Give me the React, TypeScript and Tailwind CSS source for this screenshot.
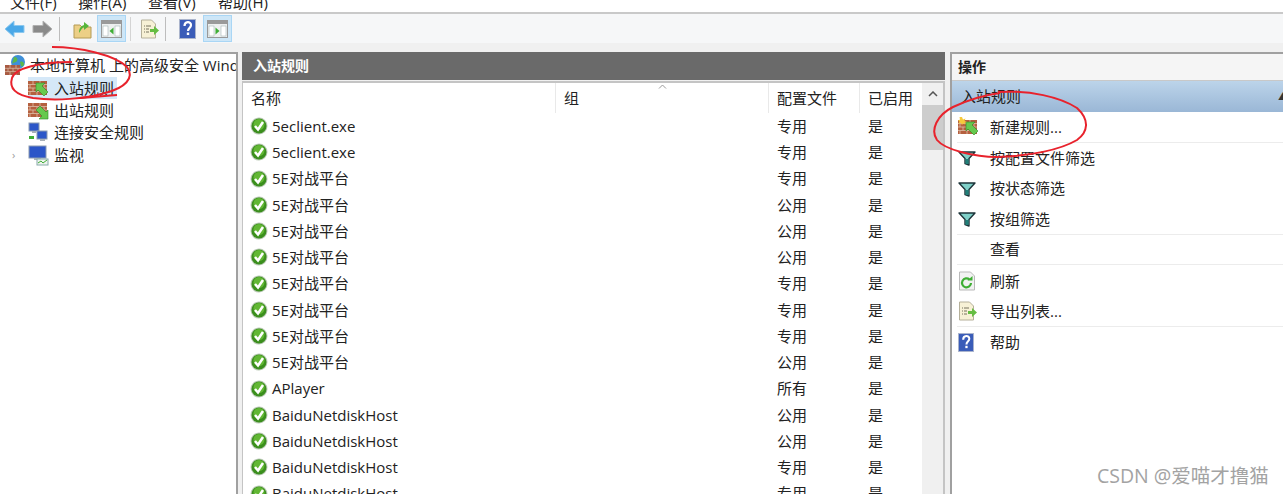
const cjk = "font-['Open_Sans','Noto_Sans_CJK_SC',sans-serif]";

const rows = [
  ["5eclient.exe", "专用"],
  ["5eclient.exe", "专用"],
  ["5E对战平台", "专用"],
  ["5E对战平台", "公用"],
  ["5E对战平台", "公用"],
  ["5E对战平台", "公用"],
  ["5E对战平台", "专用"],
  ["5E对战平台", "专用"],
  ["5E对战平台", "专用"],
  ["5E对战平台", "公用"],
  ["APlayer", "所有"],
  ["BaiduNetdiskHost", "公用"],
  ["BaiduNetdiskHost", "公用"],
  ["BaiduNetdiskHost", "专用"],
  ["BaiduNetdiskHost", "专用"],
];

const Check = () => (
  <svg width="18" height="18" viewBox="0 0 18 18" className="shrink-0">
    <circle cx="9" cy="9" r="8.500" fill="#b9c9b4" />
    <circle cx="9" cy="9" r="7.500" fill="#3b8f1d" />
    <circle cx="9" cy="7.500" r="5.500" fill="#74c83f" opacity="0.7" />
    <path d="M5 9l3 3.500 5-7.500" fill="none" stroke="#fff" strokeWidth="2.500" />
  </svg>
);

const Wall = ({ arrow }: { arrow: "in" | "out" | "new" }) => (
  <svg width="21" height="20" viewBox="0 0 21 20" className="shrink-0">
    <rect x="0" y="3" width="19" height="14" fill="#b5603f" />
    <path d="M0 6.500h19M0 10h19M0 13.500h19M5 3v3.500M12 3v3.500M2 6.500v3.500M9 6.500v3.500M16 6.500v3.500M5 10v3.500M12 10v3.500M2 13.500v3.500M9 13.500v3.500M16 13.500v3.500" stroke="#d9b59e" strokeWidth="0.900" />
    {arrow === "out" ? (
      <path d="M20 19H11L14 16L8 10L12 6L18 12L20 10Z" fill="#66c94e" stroke="#2f8a2a" strokeWidth="0.600" />
    ) : (
      <path d="M8 5H17L14 8L20 14L16 18L10 12L8 14Z" fill="#66c94e" stroke="#2f8a2a" strokeWidth="0.600" />
    )}
    {arrow === "new" && <path d="M4 0l1 2.500 2.500-1-1 2.500 2.500 1-2.500 1 1 1.500-2.500-1-1 1.500-1-2-2.500 .5 1-2-1.500-1 2-1-.5-2.500z" fill="#f6c93c" />}
  </svg>
);

const Funnel = () => (
  <svg width="18" height="18" viewBox="0 0 18 18" className="shrink-0">
    <path d="M1 3h16l-6 6.500V16l-4-1.500V9.500z" fill="#7fd0c8" stroke="#1c3338" strokeWidth="1.400" strokeLinejoin="round" />
    <path d="M7.500 10h3v5h-3z" fill="#1f7f78" />
  </svg>
);

const Help = ({ size = 17 }: { size?: number }) => (
  <svg width={size} height={size + 3} viewBox="0 0 17 20" className="shrink-0">
    <rect x="0.500" y="0.500" width="16" height="19" fill="#3a5cb8" stroke="#aab4cc" />
    <path d="M5.500 7c0-5 6.500-5 6.500-1 0 3-3 3-3 6" fill="none" stroke="#fff" strokeWidth="2.200" />
    <rect x="7.800" y="13.500" width="2.400" height="2.500" fill="#fff" />
  </svg>
);

const Export = () => (
  <svg width="20" height="20" viewBox="0 0 20 20" className="shrink-0">
    <path d="M1.500 1h10l4 4v14h-14z" fill="#f7f1d6" stroke="#b5b09a" />
    <path d="M4 7h1M6 7h5M4 10h1M6 10h3M4 13h1M6 13h3" stroke="#77735f" />
    <path d="M10 10h4V7l5 4.500-5 4.500v-3h-4z" fill="#66bd42" />
  </svg>
);

const Refresh = () => (
  <svg width="18" height="20" viewBox="0 0 18 20" className="shrink-0">
    <path d="M1.500 1h11l4 4v14h-15z" fill="#f2f2f2" stroke="#b9b9b9" />
    <path d="M13 12a4.500 4.500 0 1 1-1.500-3.500" fill="none" stroke="#3fae35" strokeWidth="2.200" />
    <path d="M9.500 9.500h5V5z" fill="#3fae35" />
  </svg>
);

const Pane = ({ side }: { side: "left" | "right" }) => (
  <div className="w-[29px] h-[27px] flex items-center justify-center bg-[#cde6f7] border border-[#a9d6f5]">
    <svg width="21" height="20" viewBox="0 0 21 20">
      <rect x="0.500" y="1.500" width="20" height="17" fill="#eef0f0" stroke="#999" />
      <rect x="1" y="2" width="19" height="3" fill="#9a9a9a" />
      <rect x="2" y="7" width="5" height="10" fill="#fff" stroke="#9aa" strokeWidth="0.500" />
      <rect x="14" y="7" width="5" height="10" fill="#fff" stroke="#9aa" strokeWidth="0.500" />
      {side === "left" ? <path d="M12.500 8.500v7l-4-3.500z" fill="#3fae35" /> : <path d="M8.500 8.500v7l4-3.500z" fill="#3fae35" />}
    </svg>
  </div>
);

const Computers = ({ monitor }: { monitor?: boolean }) => (
  <svg width="21" height="21" viewBox="0 0 21 21" className="shrink-0">
    {monitor ? (
      <>
        <rect x="1" y="1" width="17" height="12" fill="#2c56c8" stroke="#8a9ab0" />
        <rect x="6" y="13" width="7" height="2" fill="#a8b0b8" />
        <rect x="9" y="14" width="11" height="6" fill="#eef3ee" stroke="#8aa" />
        <path d="M10 18l3-2 2 2 4-3" fill="none" stroke="#3fae35" />
      </>
    ) : (
      <>
        <rect x="1" y="1" width="10" height="8" fill="#2c56c8" stroke="#8a9ab0" />
        <rect x="9" y="9" width="10" height="8" fill="#2c56c8" stroke="#8a9ab0" />
        <rect x="4" y="9" width="4" height="2" fill="#a8b0b8" />
        <rect x="12" y="17" width="5" height="2" fill="#a8b0b8" />
        <rect x="1" y="14" width="5" height="3" fill="#3fae35" />
      </>
    )}
  </svg>
);

const Globe = () => (
  <svg width="22" height="22" viewBox="0 0 22 22" className="shrink-0">
    <circle cx="13" cy="8" r="7" fill="#3f8fd8" />
    <path d="M9 3c3 0 4 2 3 4s-4 1-5 3M15 8c2-1 4 0 4 2s-2 3-3 2z" fill="#5cb84a" />
    <rect x="0" y="11" width="15" height="10" fill="#a85a42" />
    <path d="M0 14.300h15M0 17.600h15M5 11v3.300M11 11v3.300M3 14.300v3.300M8 14.300v3.300M13 14.300v3.300M5 17.600v3.400M11 17.600v3.400" stroke="#dcc2ac" strokeWidth="0.700" />
  </svg>
);

const Head = ({ w, label, sep = true }: { w: string; label: string; sep?: boolean }) => (
  <div className={`${w} shrink-0 h-[30px] flex items-center pl-2 pt-[1px] ${sep ? "border-r border-[#e9e9e9]" : ""}`}>{label}</div>
);

const Action = ({ icon, label, line }: { icon?: React.ReactNode; label: string; line?: boolean }) => (
  <div className={`h-[30.700px] flex items-center ml-[5px] ${line ? "border-b border-[#ececec]" : ""}`}>
    <div className="w-[33px] pl-[1px] flex">{icon}</div>
    <span className="text-[15px] text-[#222]">{label}</span>
  </div>
);

export default function App() {
  return (
    <div className={`relative w-[1283px] h-[494px] overflow-hidden bg-[#f0f0f0] text-[15px] text-[#222] ${cjk}`}>
      {/* menu */}
      <div className="h-[14px] bg-white border-b-2 border-[#c9c9c9] overflow-hidden flex text-[15px] leading-[20px] pl-[10px]">
        <span className="w-[68px] -mt-[8px]">文件(F)</span>
        <span className="w-[70px] -mt-[8px]">操作(A)</span>
        <span className="w-[70px] -mt-[8px]">查看(V)</span>
        <span className="-mt-[8px]">帮助(H)</span>
      </div>

      {/* toolbar */}
      <div className="h-[29px] bg-[#f6f7f8] flex items-center pl-[4px]">
        <svg width="21" height="18" viewBox="0 0 21 18">
          <path d="M1 9l9-8v4.500h10v7H10V17z" fill="#4aa8e8" stroke="#8cc8ee" />
        </svg>
        <svg width="21" height="18" viewBox="0 0 21 18" className="ml-[7px]">
          <path d="M20 9l-9-8v4.500H1v7h10V17z" fill="#8a8a8a" stroke="#b0b0b0" />
        </svg>
        <div className="w-px h-[24px] bg-[#bdbdbd] ml-[6px] mr-[13px]" />
        <svg width="19" height="20" viewBox="0 0 19 20">
          <path d="M1 6h6l2 2h9v11H1z" fill="#eccf86" stroke="#b49a55" />
          <path d="M6 14c0-5 2-7 5-8V3l5 4-5 4V8c-2 1-3 3-5 6z" fill="#55b53a" />
        </svg>
        <div className="ml-[5px]"><Pane side="left" /></div>
        <div className="w-px h-[24px] bg-[#d4d4d4] ml-[4px] mr-[9px]" />
        <Export />
        <div className="w-px h-[24px] bg-[#bdbdbd] ml-[5px] mr-[13px]" />
        <Help />
        <div className="ml-[7px]"><Pane side="right" /></div>
      </div>

      {/* panes */}
      <div className="flex pt-[9px] gap-[4px]">
        {/* tree */}
        <div className="w-[238px] h-[442px] shrink-0 bg-white border-t-2 border-r-2 border-[#a0a0a0] overflow-hidden">
          <div className="flex items-center h-[22px] mb-[1px] pl-[5px] whitespace-nowrap">
            <Globe />
            <span className="ml-[3px] min-w-0 overflow-hidden">本地计算机 上的高级安全 Windows</span>
          </div>
          {[
            { icon: <Wall arrow="in" />, label: "入站规则", on: true },
            { icon: <Wall arrow="out" />, label: "出站规则" },
            { icon: <Computers />, label: "连接安全规则" },
            { icon: <Computers monitor />, label: "监视", caret: true },
          ].map((t) => (
            <div key={t.label} className="flex items-center h-[22.300px] pl-[12px]">
              <span className="w-[16px] text-[11px] text-[#999]">{t.caret ? "›" : ""}</span>
              <div className={`flex items-center h-[22px] ${t.on ? "bg-[#d5e8f8]" : ""}`}>
                {t.icon}
                <span className="ml-[5px] pr-[3px]">{t.label}</span>
              </div>
            </div>
          ))}
        </div>

        {/* center */}
        <div className="w-[703px] shrink-0">
          <div className="h-[28px] pb-[2px] bg-[#6a6a6a] text-white font-bold text-[14px] flex items-center pl-[11px]">入站规则</div>
          <div className="mt-[1px] h-[413px] bg-white border-l border-t-2 border-r-2 border-[#c4c4c4] flex overflow-hidden">
            <div className="w-[679px] shrink-0">
              <div className="relative flex">
                <Head w="w-[313px]" label="名称" />
                <Head w="w-[213px]" label="组" />
                <Head w="w-[91px]" label="配置文件" />
                <Head w="w-[62px]" label="已启用" sep={false} />
                <svg width="9" height="5" viewBox="0 0 9 5" className="absolute left-[415px] top-[1px]">
                  <path d="M1 4.500l3.500-3.500 3.500 3.500" fill="none" stroke="#999" />
                </svg>
              </div>
              {rows.map((r, i) => (
                <div key={i} className="flex h-[26.250px] items-center">
                  <div className="w-[313px] shrink-0 flex items-center pl-[7px]">
                    <Check />
                    <span className="ml-[4px]">{r[0]}</span>
                  </div>
                  <div className="w-[213px] shrink-0" />
                  <div className="w-[91px] shrink-0 pl-2">{r[1]}</div>
                  <div className="w-[62px] shrink-0 pl-2">是</div>
                </div>
              ))}
            </div>
            <div className="w-[21px] shrink-0 bg-[#f0f0f0]">
              <div className="h-[22px] flex items-center justify-center">
                <svg width="10" height="6" viewBox="0 0 10 6">
                  <path d="M1 5l4-4 4 4" fill="none" stroke="#555" strokeWidth="1.500" />
                </svg>
              </div>
              <div className="h-[45px] bg-[#cdcdcd]" />
            </div>
          </div>
        </div>

        {/* actions */}
        <div className="ml-[1px] flex-1 bg-white border-l-2 border-t-2 border-[#a0a0a0] h-[442px]">
          <div className="h-[27px] pb-[1px] bg-[#f5f5f5] border-b border-[#c8c8c8] flex items-center pl-[6px] font-bold text-[14px]">操作</div>
          <div className="h-[31px] bg-gradient-to-b from-[#bcd4ea] to-[#9ab7d6] flex items-center justify-between pl-[9px] overflow-hidden">
            <span>入站规则</span>
            <span className="text-[10px] text-[#333] -mr-[5px]">▲</span>
          </div>
          <Action icon={<Wall arrow="new" />} label="新建规则..." line />
          <Action icon={<Funnel />} label="按配置文件筛选" />
          <Action icon={<Funnel />} label="按状态筛选" />
          <Action icon={<Funnel />} label="按组筛选" line />
          <Action label="查看" line />
          <Action icon={<Refresh />} label="刷新" />
          <Action icon={<Export />} label="导出列表..." line />
          <Action icon={<Help size={16} />} label="帮助" />
        </div>
      </div>

      {/* red pen marks */}
      <svg width="1283" height="494" viewBox="0 0 1283 494" className="absolute inset-0 pointer-events-none" fill="none" stroke="#e8222c" strokeWidth="2">
        <path d="M52 47C80 47 115 55 127 67C135 78 125 88 105 93C85 99 55 101 33 98C15 95 9 88 12 78C15 68 40 62 72 62" />
        <path d="M80 98L117 95" />
        <path d="M998 92C1030 90 1060 97 1077 108C1090 120 1088 132 1077 140C1060 150 1030 156 997 157C975 157 945 150 937 140C930 130 937 115 953 107C968 100 985 95 1000 93" />
      </svg>

      <div className="absolute left-[1097px] top-[462px] text-[19.500px] leading-[28px] text-[#a3a3a3] whitespace-nowrap">CSDN @爱喵才撸猫</div>
    </div>
  );
}
